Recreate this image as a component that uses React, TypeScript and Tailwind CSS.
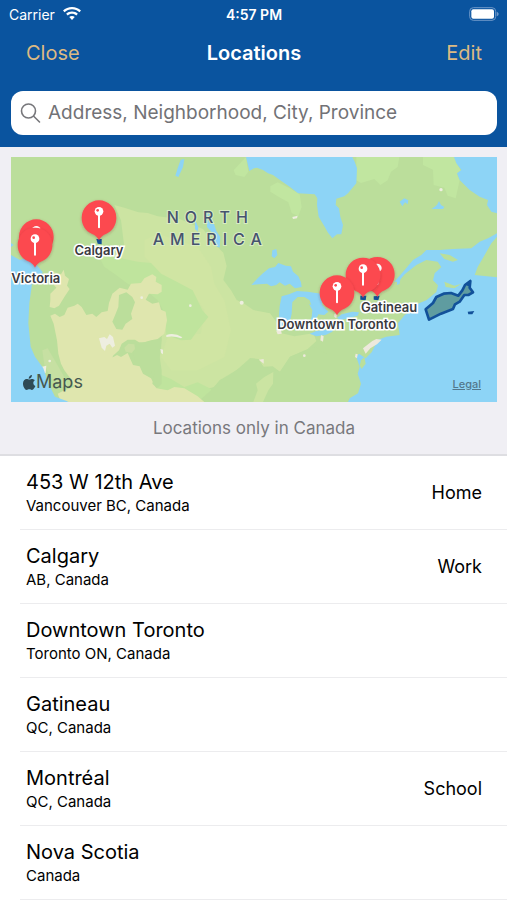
import React, { useState } from "react";

type Location = {
  name: string;
  region: string;
  tag?: string;
};

const locations: Location[] = [
  { name: "453 W 12th Ave", region: "Vancouver BC, Canada", tag: "Home" },
  { name: "Calgary", region: "AB, Canada", tag: "Work" },
  { name: "Downtown Toronto", region: "Toronto ON, Canada" },
  { name: "Gatineau", region: "QC, Canada" },
  { name: "Montréal", region: "QC, Canada", tag: "School" },
  { name: "Nova Scotia", region: "Canada" },
];

// label centers, in percent of the map
const labels = [
  { text: "Calgary", left: 18.1, top: 38 },
  { text: "Victoria", left: 5.1, top: 49.4 },
  { text: "Gatineau", left: 77.8, top: 61.2 },
  { text: "Downtown Toronto", left: 67, top: 68.2 },
];

function WifiIcon() {
  return (
    <svg viewBox="0 0 54 42" className="h-[14px] w-[18px]" fill="#fff" aria-hidden="true">
      <path d="M27 0C16.600 0 7.200 4 0 10.600l4.700 4.900C10.500 10 18.400 6.700 27 6.700S43.500 10 49.300 15.500l4.700-4.900C46.800 4 37.400 0 27 0Z" />
      <path d="M27 13.500c-6.800 0-13 2.600-17.600 6.900l4.800 5c3.400-3.100 7.900-5 12.800-5s9.400 1.900 12.800 5l4.800-5C40 16.100 33.800 13.500 27 13.500Z" />
      <path d="M27 27c-3.200 0-6 1.200-8.200 3.200L27 39l8.200-8.800C33 28.200 30.200 27 27 27Z" />
    </svg>
  );
}

function BatteryIcon() {
  return (
    <svg viewBox="0 0 90 42" className="h-[14px] w-[30px]" aria-hidden="true">
      <rect x="2" y="2" width="78" height="38" rx="11" fill="none" stroke="#6d97c8" strokeWidth="3" />
      <rect x="7" y="7" width="68" height="28" rx="6" fill="#fff" />
      <path d="M83 14c3 1 6 4 6 7s-3 6-6 7Z" fill="#6d97c8" />
    </svg>
  );
}

function SearchIcon() {
  return (
    <svg viewBox="0 0 22 22" className="h-[22px] w-[22px] shrink-0" fill="none" stroke="#77777b" strokeWidth="1.600" aria-hidden="true">
      <circle cx="8.500" cy="9" r="7" />
      <path d="M13.700 14.200 19.500 20" strokeLinecap="round" />
    </svg>
  );
}

function Pin({ x, y }: { x: number; y: number }) {
  return (
    <g transform={`translate(${x} ${y})`}>
      <path
        d="M0 68C-3 60-10 53-22 48C-40 40-52 22-52 0A52 52 0 1 1 52 0C52 22 40 40 22 48C10 53 3 60 0 68Z"
        fill="#fc4850"
        filter="url(#pinShadow)"
      />
      <rect x="-3" y="-12" width="6" height="44" rx="3" fill="#fff" />
      <circle cy="-19" r="13" fill="#fff" />
      <circle cx="-4" cy="-22" r="4" fill="#fc4850" />
    </g>
  );
}

function MapDrawing() {
  return (
    <svg viewBox="0 0 1458 735" className="block h-full w-full" aria-hidden="true">
      <defs>
        <filter id="pinShadow" x="-20%" y="-20%" width="140%" height="140%">
          <feDropShadow dx="0" dy="3" stdDeviation="5" floodColor="#7a2a2a" floodOpacity="0.35" />
        </filter>
      </defs>
      <rect width="1458" height="735" fill="#bbde9b" />

      {/* tundra */}
      <g fill="#c1e6a0">
        <path d="M1036 0H1165L1160 30L1140 44L1130 70L1108 84L1090 66L1050 78L1036 70Z" />
        <path d="M1236 0H1329L1350 42L1338 50L1346 70L1334 124L1310 116L1300 92L1268 84L1266 38L1236 24Z" />
        <path d="M778 88L800 76L836 94L866 112L872 150L862 178L842 168L832 136L800 118L778 104Z" />
        <path d="M668 40L705 0L712 44L700 60L674 54Z" />
      </g>

      {/* great plains */}
      <path
        d="M310 144L340 152L382 166L410 168L440 178L506 186L577 217L600 250L637 287L647 327L637 369L660 400L677 429L700 440L727 459L777 469L800 500L812 529L850 538L907 529L916 552L890 576L837 599L807 644L785 628L757 629L742 606L717 604L700 626L677 639L650 660L627 669L610 690L570 700L540 735H430L450 560L462 440L380 340L330 330L290 300L340 270L330 190Z"
        fill="#cce4a2"
      />
      <path d="M400 250L440 230L500 250L560 270L600 330L610 380L640 430L660 520L640 600L560 640L480 640L450 600L470 540L570 530L580 460L540 400L450 350L400 300Z" fill="#d0e5a3" />

      {/* foothills */}
      <path
        d="M262 294L300 290L340 306L380 314L420 318L450 350L500 376L545 400L574 460L592 480L560 520L540 548L510 550L466 534L462 470L440 430L404 400L350 380L310 350L280 330Z"
        fill="#bfe49d"
      />
      <path d="M442 650L480 666L520 690L560 676L600 696L620 735H420L440 700Z" fill="#bfe49d" />
      <path d="M627 669L677 639L717 604L742 606L757 629L807 644L837 599L912 569L960 600L960 735H560L600 700Z" fill="#bbde9b" />
      <path d="M727 735L740 700L735 680L760 660L787 645L786 680L772 700L756 735Z" fill="#cbe4a2" />

      {/* dry west */}
      <path
        d="M128 346L150 352L158 338L162 356L174 366L168 386L176 396L160 420L144 446L130 454L116 450L118 430L118 410L136 392L122 376Z"
        fill="#dfe6ae"
      />
      <path
        d="M118 476L132 470L146 480L160 474L170 452L190 446L200 440L212 450L226 474L244 470L256 480L272 466L290 462L294 438L304 410L326 392L350 398L360 380L390 378L400 364L424 352L436 360L434 374L452 384L452 404L440 412L414 410L404 428L424 440L444 436L450 458L464 464L468 490L460 530L440 546L420 550L400 556L384 556L372 548L350 548L332 560L324 580L306 596L300 618L304 640L284 650L260 646L258 624L280 628L296 606L318 594L330 600L350 588L366 624L386 628L396 650L420 664L436 694L470 700L490 690L520 694L560 718L580 735H150L140 710L160 700L190 690L178 664L160 640L150 620L142 590L138 550L128 500Z"
        fill="#dfe6ae"
      />
      <path d="M324 414L346 406L364 420L372 436L360 470L364 486L344 500L334 518L316 516L304 494L314 470L322 450Z" fill="#bbde9b" />
      <path d="M376 564L400 556L434 550L452 544L450 580L446 600L452 640L452 680L438 694L424 680L432 640L424 630L420 650L396 630L372 610L366 584Z" fill="#bbde9b" />
      <path d="M370 562L352 560L340 572L344 584L362 588L372 576Z" fill="#c9e0a2" />
      <path d="M94 580L110 574L136 618L160 660L172 690L150 690L120 664L100 624Z" fill="#c6e0a2" />
      <g fill="#eeeee0">
        <path d="M264 544L280 540L288 546L296 532L306 540L312 566L304 572L296 560L286 566L282 582L272 572Z" />
        <path d="M90 630L106 626L104 648L96 652Z" />
        <path d="M466 534Q490 526 514 541L510 544Q490 536 466 540Z" />
        <path d="M448 576L456 578L456 592L450 588Z" />
        <circle cx="692" cy="437" r="6" />
        <circle cx="116" cy="612" r="4" />
        <circle cx="392" cy="422" r="4" />
        <circle cx="538" cy="446" r="4" />
        <path d="M844 180L860 176L858 184L846 186Z" />
        <circle cx="1290" cy="98" r="5" />
      </g>

      {/* oceans */}
      <g fill="#8dd4f6">
        <path d="M705 0L715 42L729 34L738 32L756 39L771 49L786 54L811 72L836 89L861 109L911 112L919 124L918 144L923 179L941 209L950 226L964 244L978 232L991 232L996 204L988 179L984 154L974 144L976 125L1000 118L1011 109L1036 79L1038 34L1031 14L1024 0Z" />
        <path d="M1329 0L1336 19L1351 39L1338 49L1346 69L1376 99L1406 119L1431 129L1428 144L1441 164L1458 169V0Z" />
        <path d="M0 294L27 309L50 300L77 324L95 345L90 362L64 372L62 389L55 439L52 499L59 569L72 599L97 634L112 679L132 719L167 732L172 735H0Z" />
        <path d="M0 258L8 264L0 270Z" />
        <path d="M1458 229L1431 244L1406 254L1381 274L1326 276L1286 279L1246 279L1231 294L1206 309L1181 339L1150 374L1162 374L1181 352L1216 324L1246 309L1280 314L1291 330L1271 349L1266 370L1281 385L1276 405L1246 430L1211 444L1206 459L1181 474L1161 499L1166 534L1126 539L1101 548L1082 586L1064 604L1044 590L1036 600L1046 629L1040 650L1050 680L1041 709L1016 724L1011 735H1458Z" />
      </g>
      <g fill="#bbdf9a">
        <path d="M1458 239L1441 259L1421 294L1400 330L1391 354L1458 361Z" />
        <path d="M1286 289L1316 294L1341 309L1326 314L1300 306Z" />
        <path d="M1300 374L1330 386L1352 380L1330 394L1304 390Z" />
        <path d="M1050 610L1060 600L1064 620L1052 636L1046 626Z" />
      </g>

      {/* lakes */}
      <g fill="#8dd4f6">
        <path d="M509 8L520 6L516 30L502 60L493 56L500 34Z" />
        <path d="M552 190L562 210L560 224L552 216Z" />
        <path d="M590 160L602 180L616 222L628 240L626 272L616 268L608 232L588 210Z" />
        <path d="M784 280L796 276L799 294L790 304L782 298Z" />
        <path d="M1166 134L1180 124L1192 130L1190 142L1182 136L1174 148Z" />
        <path d="M1262 156L1278 144L1284 132L1290 144L1300 150L1296 156Z" />
        <path d="M721 384L740 364L754 350L774 334L792 330L802 318L824 326L840 328L846 344L862 358L870 376L872 390L852 394L836 380L822 386L806 376L796 384L780 388L768 380L744 382Z" />
        <path d="M806 448L812 418L834 412L858 402L890 404L930 410L934 444L952 464L940 474L920 472L902 448L896 430L880 420L860 420L844 436L842 470L834 506L818 516L806 502L804 474Z" />
        <path d="M894 440L904 460L902 480L894 500L902 516L914 510L912 488L922 474L910 450Z" />
        <path d="M896 530L916 522L944 518L968 514L964 524L944 534L916 538Z" />
        <path d="M978 482L992 472L1024 464L1044 466L1040 476L1010 484L988 490Z" />
        <path d="M1158 372L1168 366L1166 380L1158 384Z" />
      </g>
      <g fill="#eee9dc">
        <path d="M1056 574L1084 552L1096 546L1112 548L1098 562L1078 574L1064 590Z" />
        <path d="M930 534L938 538L936 554L928 550Z" />
        <path d="M744 608L758 606L758 620Z" />
        <path d="M1034 590L1040 592L1038 604L1032 600Z" />
        <circle cx="880" cy="596" r="4" />
        <path d="M796 522L810 518L812 530L800 532Z" />
        <path d="M970 470L978 470L976 484L970 480Z" />
      </g>

      {/* outlined areas */}
      <path
        d="M1244 457L1266 438L1276 420L1298 410L1320 408L1342 416L1354 400L1362 384L1378 372L1376 392L1386 406L1372 414L1360 414L1346 434L1332 442L1326 456L1290 470L1254 488Z"
        fill="#5f9ca0"
        stroke="#12519a"
        strokeWidth="8"
        strokeLinejoin="round"
      />
      <g fill="#12519a">
        <path d="M1364 380L1380 368L1378 388L1368 386Z" />
        <path d="M1370 464L1390 462L1384 472L1372 472Z" />
        <path d="M256 246L272 246L272 262L260 260Z" />
        <path d="M1048 416L1066 416L1064 430L1048 428Z" />
        <path d="M1088 418L1106 416L1102 430L1088 428Z" />
      </g>

      <Pin x={76} y={239} />
      <Pin x={72} y={264} />
      <Pin x={264} y={182} />
      <Pin x={1099} y={352} />
      <Pin x={1056} y={354} />
      <Pin x={978} y={407} />
    </svg>
  );
}

function AppleIcon() {
  return (
    <svg viewBox="0 0 24 28" className="h-[15px] w-[13px]" fill="#2f4a55" aria-hidden="true">
      <path d="M16.500 0c.2 2-.6 3.800-1.700 5.100-1.100 1.300-2.700 2.200-4.300 2.100-.2-1.900.7-3.800 1.700-5C13.300 1 15.100.1 16.500 0Z" />
      <path d="M23 20.500c-.6 1.500-1 2.100-1.800 3.400-1.200 1.800-2.800 4-4.800 4-1.800 0-2.300-1.200-4.700-1.200s-3 1.200-4.800 1.200c-2 0-3.500-2-4.700-3.800C-.9 19.200-.9 13.100 1.900 9.900c1.400-1.600 3.200-2.500 5-2.500 1.900 0 3.400 1.200 5 1.200s2.800-1.200 5.200-1.200c1.800 0 3.700 1 5 2.600-4.400 2.400-3.700 8.700.9 10.500Z" />
    </svg>
  );
}

function LocationMap() {
  return (
    <div className="relative aspect-[486/245] overflow-hidden">
      <MapDrawing />
      <div className="absolute top-[20%] left-[41%] -translate-x-1/2 text-center text-[16px] leading-[22px] font-medium tracking-[6px] text-[#46536e] [paint-order:stroke_fill] [-webkit-text-stroke:2px_#d9ecc4]">
        NORTH
        <br />
        AMERICA
      </div>
      {labels.map((label) => (
        <span
          key={label.text}
          className="absolute -translate-x-1/2 -translate-y-1/2 text-[13px] leading-4 font-semibold whitespace-nowrap text-[#3a3a3f] [paint-order:stroke_fill] [-webkit-text-stroke:3px_#fff]"
          style={{ left: `${label.left}%`, top: `${label.top}%` }}
        >
          {label.text}
        </span>
      ))}
      <div className="absolute bottom-2 left-3 flex items-center text-[18px] leading-6 text-[#46584f]">
        <AppleIcon />
        Maps
      </div>
      <a href="#legal" className="absolute right-4 bottom-2.5 text-[11px] leading-4 font-medium text-[#53788c] underline">
        Legal
      </a>
    </div>
  );
}

export default function App() {
  const [query, setQuery] = useState("");

  return (
    <div className="min-h-screen bg-white font-[Inter,sans-serif] text-black">
      <header className="bg-[#0a549f] pr-[10px] pb-3 pl-[11px] text-white">
        {/* Status bar */}
        <div className="-mx-[2px] grid h-7 grid-cols-3 items-center text-[14px]">
          <div className="flex items-center gap-2">
            Carrier
            <WifiIcon />
          </div>
          <div className="text-center font-semibold">4:57 PM</div>
          <div className="flex justify-end">
            <BatteryIcon />
          </div>
        </div>

        {/* Nav bar */}
        <div className="grid h-[50px] grid-cols-3 items-center px-[15px] text-[20px]">
          <button type="button" className="justify-self-start text-[#dcba83]">Close</button>
          <h1 className="text-center font-semibold">Locations</h1>
          <button type="button" className="justify-self-end text-[#dcba83]">Edit</button>
        </div>

        <label className="mt-[13px] flex h-11 items-center gap-[6px] rounded-xl bg-white px-[9px]">
          <SearchIcon />
          <input
            type="search"
            aria-label="Search locations"
            value={query}
            onChange={(e) => setQuery(e.target.value)}
            placeholder="Address, Neighborhood, City, Province"
            className="min-w-0 flex-1 bg-transparent text-[19px] text-black outline-none placeholder:text-[#727276]"
          />
        </label>
      </header>

      <section className="border-b-2 border-[#dedee2] bg-[#f0eff4] pt-[10px] pr-[10px] pl-[11px]">
        <LocationMap />
        <p className="py-3 text-center text-[17px] leading-7 text-[#78787c]">Locations only in Canada</p>
      </section>

      <ul className="pl-5">
        {locations.map((location) => (
          <li key={location.name} className="flex items-center justify-between border-b border-[#ececee] pt-3 pr-[25px] pb-[13px] pl-[6px]">
            <div>
              <div className="text-[20px] leading-7">{location.name}</div>
              <div className="text-[15px] leading-5">{location.region}</div>
            </div>
            {location.tag && <div className="text-[18px]">{location.tag}</div>}
          </li>
        ))}
      </ul>
    </div>
  );
}
